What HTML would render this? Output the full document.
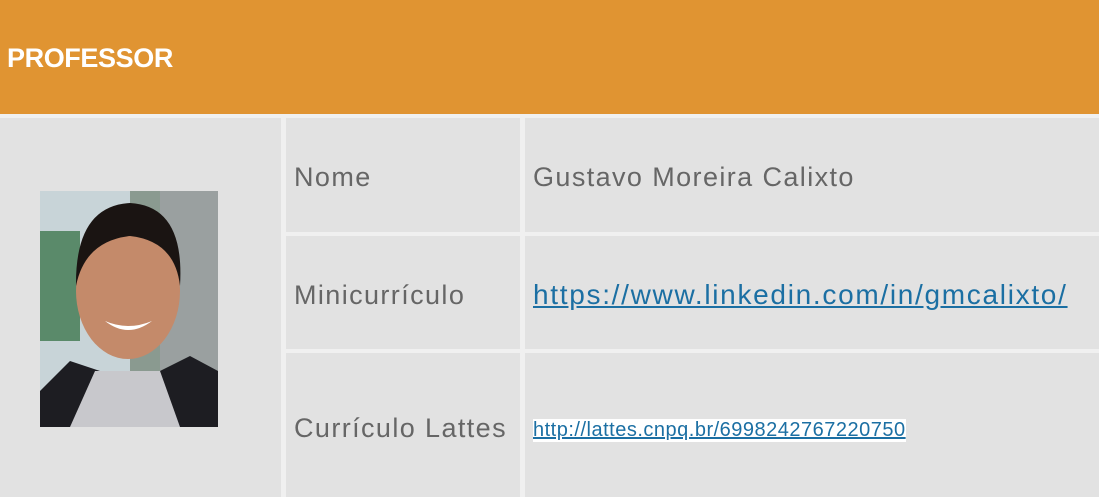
<!DOCTYPE html>
<html><head><meta charset="utf-8"><style>
body{margin:0;width:1099px;height:497px;background:#f0f0f0;position:relative;overflow:hidden;font-family:"Liberation Sans","DejaVu Sans",sans-serif;}
.hd{position:absolute;left:0;top:0;width:1099px;height:114px;background:#e09432;}
.hd span{position:absolute;left:7px;top:43px;color:#fff;font-weight:bold;font-size:27px;letter-spacing:-0.4px}
.c{position:absolute;background:#e2e2e2;color:#666;font-size:27px;letter-spacing:1.4px}
.c span{position:absolute;left:8px;}
a{color:#1b6fa3;text-decoration:underline;}
</style></head><body>
<div class="hd"><span>PROFESSOR</span></div>
<div class="c" style="left:0;top:118px;width:281px;height:379px">
 <svg style="position:absolute;left:40px;top:73px" width="178" height="236" viewBox="0 0 178 236">
  <rect width="178" height="236" fill="#8a9a90"/>
  <rect width="90" height="236" fill="#c8d4d8"/>
  <rect x="0" y="40" width="40" height="110" fill="#5a8a6a"/>
  <rect x="120" y="0" width="58" height="236" fill="#9aa0a0"/>
  <path d="M0 200 L30 170 L60 180 L120 180 L150 165 L178 180 L178 236 L0 236Z" fill="#1d1d22"/>
  <path d="M30 236 L55 180 L120 180 L140 236Z" fill="#c8c8cc"/>
  <ellipse cx="88" cy="100" rx="52" ry="68" fill="#c48a6a"/>
  <path d="M36 95 Q35 15 90 12 Q145 15 140 95 Q135 50 90 45 Q45 50 36 95Z" fill="#1a1412"/>
  <path d="M65 130 Q88 148 112 130 Q88 140 65 130Z" fill="#fff"/>
 </svg>
</div>
<div class="c" style="left:286px;top:118px;width:234px;height:114px"><span style="top:44px">Nome</span></div>
<div class="c" style="left:525px;top:118px;width:574px;height:114px"><span style="top:44px">Gustavo Moreira Calixto</span></div>
<div class="c" style="left:286px;top:236px;width:234px;height:113px"><span style="top:44px">Minicurrículo</span></div>
<div class="c" style="left:525px;top:236px;width:574px;height:113px"><span style="top:43px;font-size:28px;letter-spacing:1.7px"><a>https://www.linkedin.com/in/gmcalixto/</a></span></div>
<div class="c" style="left:286px;top:353px;width:234px;height:144px"><span style="top:60px">Currículo Lattes</span></div>
<div class="c" style="left:525px;top:353px;width:574px;height:144px"><span style="top:66px;font-size:20px;letter-spacing:0.5px;background:#fff"><a>http://lattes.cnpq.br/6998242767220750</a></span></div>
</body></html>
